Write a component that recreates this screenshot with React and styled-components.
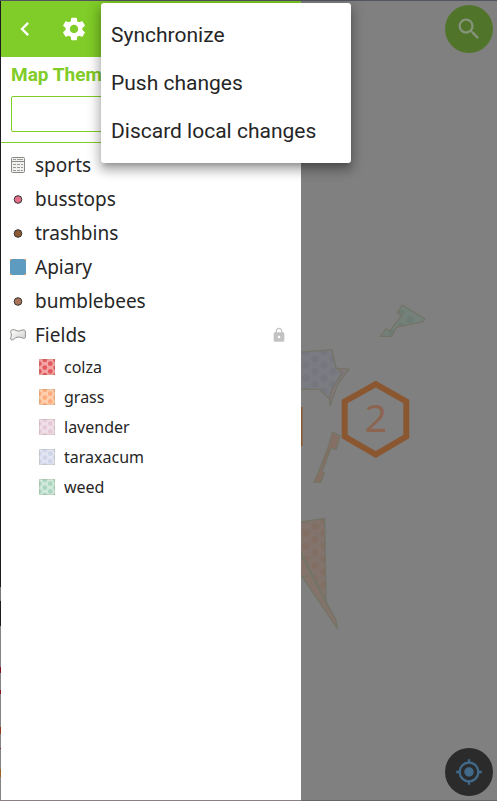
import React, { useId } from "react";
import styled, { createGlobalStyle } from "styled-components";
import {
  MdChevronLeft,
  MdSettings,
  MdSearch,
  MdMyLocation,
  MdLock,
} from "react-icons/md";

const GlobalStyle = createGlobalStyle`
  *, *::before, *::after { box-sizing: border-box; }
  body { margin: 0; background: #808080; }
  button, select { font: inherit; color: inherit; }
`;

const Screen = styled.div`
  position: relative;
  display: grid;
  grid-template-columns: 1px 300px minmax(0, 1fr);
  min-height: 100vh;
  border-top: 1px solid #50555f;
  font-family: "Noto Sans", sans-serif;
  color: #262626;
`;

const Edge = styled.div`
  background: linear-gradient(
    #1c1b20 0 586px,
    #777 586px 600px,
    #1c1b20 600px 625px,
    #858585 625px 666px,
    #7c1424 666px 672px,
    #858585 672px 689px,
    #8a1420 689px 693px,
    #858585 693px 726px,
    #8c3a1c 726px 733px,
    #858585 733px 747px,
    #8a1420 747px 748px,
    #858585 748px 768px,
    #9a602a 768px 776px,
    #858585 776px
  );
`;

const Drawer = styled.aside`
  display: flex;
  flex-direction: column;
  background: #fff;
  border-bottom: 1px solid #8a8082;
`;

const Toolbar = styled.header`
  display: flex;
  align-items: center;
  gap: 1px;
  height: 56px;
  background: #80cc28;
  color: #fff;
`;

const IconButton = styled.button`
  display: grid;
  place-items: center;
  width: 48px;
  height: 48px;
  padding: 0;
  border: 0;
  background: none;
  cursor: pointer;
`;

const ThemeSection = styled.section`
  display: flex;
  flex-direction: column;
  padding: 0 10px 10px;
  border-bottom: 1px solid #80cc28;
`;

const ThemeLabel = styled.label`
  margin-bottom: 3px;
  font: 700 19px/36px Roboto, sans-serif;
  color: #80cc28;
`;

const ThemeSelect = styled.select`
  appearance: none;
  height: 36px;
  padding: 0 8px;
  border: 1px solid #80cc28;
  border-radius: 2px;
  background: #fff;
`;

const LayerList = styled.ul`
  margin: 0;
  padding: 5px 0 0;
  list-style: none;
`;

const LayerRow = styled.div`
  display: flex;
  align-items: center;
  gap: 9px;
  height: 34px;
  padding: 0 14px 0 8px;
  font-size: 19px;
`;

const LayerName = styled.span`
  flex: 1;
`;

const Legend = styled.ul`
  margin: 0;
  padding: 0;
  list-style: none;
`;

const LegendRow = styled.li`
  display: flex;
  align-items: center;
  gap: 9px;
  height: 30px;
  padding-left: 38px;
  font-size: 16px;
`;

const LockIcon = styled(MdLock)`
  color: #c2c2c2;
`;

const MapArea = styled.main`
  display: flex;
  position: relative;
  overflow: hidden;
  background: #808080;
  border-bottom: 1px solid #676767;
`;

const MapDrawing = styled.svg`
  flex: 1;
  width: 100%;
  min-height: 100%;
`;

const ClusterCount = styled.text`
  font: 400 39px "Noto Sans", sans-serif;
  fill: #8c6450;
  text-anchor: middle;
`;

const RoundButton = styled.button`
  position: absolute;
  right: 4px;
  ${(p) => (p.$place === "top" ? "top: 4px;" : "bottom: 4px;")}
  display: grid;
  place-items: center;
  width: 48px;
  height: 48px;
  padding: 0;
  border: 0;
  border-radius: 50%;
  background: ${(p) => p.$fill};
  color: ${(p) => p.$ink};
  cursor: pointer;
`;

const Menu = styled.div`
  position: absolute;
  top: 2px;
  left: 101px;
  display: flex;
  flex-direction: column;
  width: 250px;
  padding: 8px 0;
  border-radius: 3px;
  background: #fff;
  box-shadow:
    0 5px 5px -3px rgba(0, 0, 0, 0.2),
    0 8px 10px 1px rgba(0, 0, 0, 0.14),
    0 3px 14px 2px rgba(0, 0, 0, 0.22);
`;

const MenuItem = styled.button`
  height: 48px;
  padding: 0 10px;
  border: 0;
  background: none;
  font: 400 21px/48px Roboto, sans-serif;
  text-align: left;
  cursor: pointer;
`;

function TableIcon() {
  return (
    <svg width="17" height="17" viewBox="0 0 17 17" aria-hidden="true">
      <rect x="2.5" y="0.5" width="13" height="15" rx="1" fill="#f1f1ef" stroke="#888a85" />
      <path d="M3 4.5H15" stroke="#888a85" />
      <path
        d="M4 2.5H7M8 2.5H14M4 7.5H7M8 7.5H11M12 7.5H14M4 10.5H7M8 10.5H11M12 10.5H14M4 13.5H7M8 13.5H11M12 13.5H14"
        stroke="#9a9a96"
      />
    </svg>
  );
}

function PointIcon({ color }) {
  return (
    <svg width="17" height="17" viewBox="0 0 17 17" aria-hidden="true">
      <circle cx="9" cy="8.5" r="3.8" fill={color} stroke="#333" />
    </svg>
  );
}

function SquareIcon() {
  return (
    <svg width="17" height="17" viewBox="0 0 17 17" aria-hidden="true">
      <rect x="1" y="0" width="16" height="16" fill="#f0a05c" />
      <path d="M3 0H15L17 2V14L15 16H3L1 14V2Z" fill="#5d9bc0" />
    </svg>
  );
}

function PolygonIcon() {
  const id = useId();
  return (
    <svg width="17" height="17" viewBox="0 0 17 17" aria-hidden="true">
      <linearGradient id={id} x1="0" y1="0" x2="1" y2="1">
        <stop offset="0" stopColor="#fff" />
        <stop offset="1" stopColor="#cfd0cd" />
      </linearGradient>
      <path
        d="M2.6 3C4.5 2 6.4 3.2 8.6 4C10.8 4.4 12.6 2.6 15.2 2.9C17 3.4 16.4 7 16.4 9.5C16.5 11.4 15.4 11.6 13.5 11C11.2 10 8.4 9.6 6.6 10.8C5 12.4 2.6 13.8 1.7 12.2C1.4 10.2 2.8 8.8 2.3 6.8C1.6 5.4 1.5 3.8 2.6 3Z"
        fill={`url(#${id})`}
        stroke="#8b8d88"
      />
    </svg>
  );
}

const DOTS = [
  [0.4, 4.7], [0.4, 12.4], [5.8, 0.9], [5.8, 8.6], [5.8, 16.2],
  [11.3, 4.7], [11.3, 12.4], [16.6, 0.9], [16.6, 8.6], [16.6, 16.2],
];

function Swatch({ base, dot }) {
  return (
    <svg width="16" height="16" viewBox="0 0 16 16" aria-hidden="true">
      <rect width="16" height="16" fill={base} />
      {DOTS.map(([x, y]) => (
        <circle key={`${x}-${y}`} cx={x} cy={y} r="2.4" fill={dot} />
      ))}
      <rect x="0.5" y="0.5" width="15" height="15" fill="none" stroke="#8a8a60" strokeOpacity="0.2" />
    </svg>
  );
}

const LAYERS = [
  { name: "sports", icon: <TableIcon /> },
  { name: "busstops", icon: <PointIcon color="#e5708a" /> },
  { name: "trashbins", icon: <PointIcon color="#8d5a34" /> },
  { name: "Apiary", icon: <SquareIcon /> },
  { name: "bumblebees", icon: <PointIcon color="#a87358" /> },
  {
    name: "Fields",
    icon: <PolygonIcon />,
    locked: true,
    legend: [
      { name: "colza", base: "#f3a6a6", dot: "#e3595f" },
      { name: "grass", base: "#fdd0b0", dot: "#fbab7d" },
      { name: "lavender", base: "#f0dfe7", dot: "#e5c9d9" },
      { name: "taraxacum", base: "#e2e5f1", dot: "#ced5e9" },
      { name: "weed", base: "#d0e9da", dot: "#abd6bd" },
    ],
  },
];

const MENU_ITEMS = ["Synchronize", "Push changes", "Discard local changes"];

function DotPattern({ id, base, dot, x, y }) {
  return (
    <pattern id={id} x={x} y={y} width="18" height="13" patternUnits="userSpaceOnUse">
      <rect width="18" height="13" fill={base} />
      <circle cx="9" cy="3.5" r="3.5" fill={dot} />
      <circle cx="0" cy="10" r="3.5" fill={dot} />
      <circle cx="18" cy="10" r="3.5" fill={dot} />
      <circle cx="0" cy="-3" r="3.5" fill={dot} />
      <circle cx="18" cy="-3" r="3.5" fill={dot} />
    </pattern>
  );
}

function FieldMap() {
  return (
    <MapDrawing role="img" aria-label="Map of fields">
      <defs>
        <DotPattern id="field-blue" base="#7b7b82" dot="#75767e" x="306" y="355" />
        <DotPattern id="field-green" base="#74807a" dot="#6e7b75" x="401" y="316" />
        <DotPattern id="field-orange" base="#82746c" dot="#826e62" x="306" y="523" />
      </defs>
      <g transform="translate(-301 -1)" stroke="#747468" strokeWidth="1.3">
        <path
          d="M402.3 305L415.7 313.3L424.7 318.5L423.3 321.7L396.7 327L391.7 336.3H380.3L386 328.7L389.3 331.3L401.3 316L397.3 312.7Z"
          fill="url(#field-green)"
        />
        <path
          d="M336 368.3L349 369L337.3 385L330 406.3L329.5 397L332 388.7L342 373.3Z"
          fill="#81767a"
        />
        <path
          d="M300 352.3L332 349.7L336 367.7L342 373.3L332 388.7L329.3 398.7L319.3 389.3H300Z"
          fill="url(#field-blue)"
        />
        <path
          d="M332.3 432.3L340 435.7L336.3 449.7L331 448L322 472L324.3 473.3L320.7 482.3H313.7L319.3 470L328.3 446.7Z"
          fill="#856f65"
        />
        <path d="M300 522L324.7 518.3L326 601L300 551Z" fill="url(#field-orange)" />
        <path d="M300 553L326 603L335.7 619L337.7 629L300 574Z" fill="#83736a" />
        <path d="M300 550L335.7 620M302 577.5L311 574" fill="none" />
        <path
          d="M375.7 384.2L406.3 401.5V436.5L375.7 454.5L344.7 436.5V401.5Z"
          fill="none"
          stroke="#8a5731"
          strokeWidth="6"
        />
        <path d="M301 407V446" stroke="#8a5731" strokeWidth="3" />
      </g>
      <ClusterCount x="75" y="431">2</ClusterCount>
    </MapDrawing>
  );
}

export default function App() {
  return (
    <>
      <GlobalStyle />
      <Screen>
        <Edge />
        <Drawer>
          <Toolbar>
            <IconButton aria-label="Back">
              <MdChevronLeft size={28} />
            </IconButton>
            <IconButton aria-label="Settings">
              <MdSettings size={28} />
            </IconButton>
          </Toolbar>
          <ThemeSection>
            <ThemeLabel htmlFor="map-theme">Map Theme</ThemeLabel>
            <ThemeSelect id="map-theme" defaultValue="">
              <option value="" />
            </ThemeSelect>
          </ThemeSection>
          <LayerList>
            {LAYERS.map((layer) => (
              <li key={layer.name}>
                <LayerRow>
                  {layer.icon}
                  <LayerName>{layer.name}</LayerName>
                  {layer.locked && <LockIcon size={16} aria-label="Locked" />}
                </LayerRow>
                {layer.legend && (
                  <Legend>
                    {layer.legend.map((entry) => (
                      <LegendRow key={entry.name}>
                        <Swatch base={entry.base} dot={entry.dot} />
                        {entry.name}
                      </LegendRow>
                    ))}
                  </Legend>
                )}
              </li>
            ))}
          </LayerList>
        </Drawer>
        <MapArea>
          <FieldMap />
          <RoundButton $place="top" $fill="#50742a" $ink="#85937b" aria-label="Search">
            <MdSearch size={28} />
          </RoundButton>
          <RoundButton $place="bottom" $fill="#2b2b2b" $ink="#41698a" aria-label="My location">
            <MdMyLocation size={28} />
          </RoundButton>
        </MapArea>
        <Menu role="menu">
          {MENU_ITEMS.map((item) => (
            <MenuItem key={item} role="menuitem">
              {item}
            </MenuItem>
          ))}
        </Menu>
      </Screen>
    </>
  );
}
